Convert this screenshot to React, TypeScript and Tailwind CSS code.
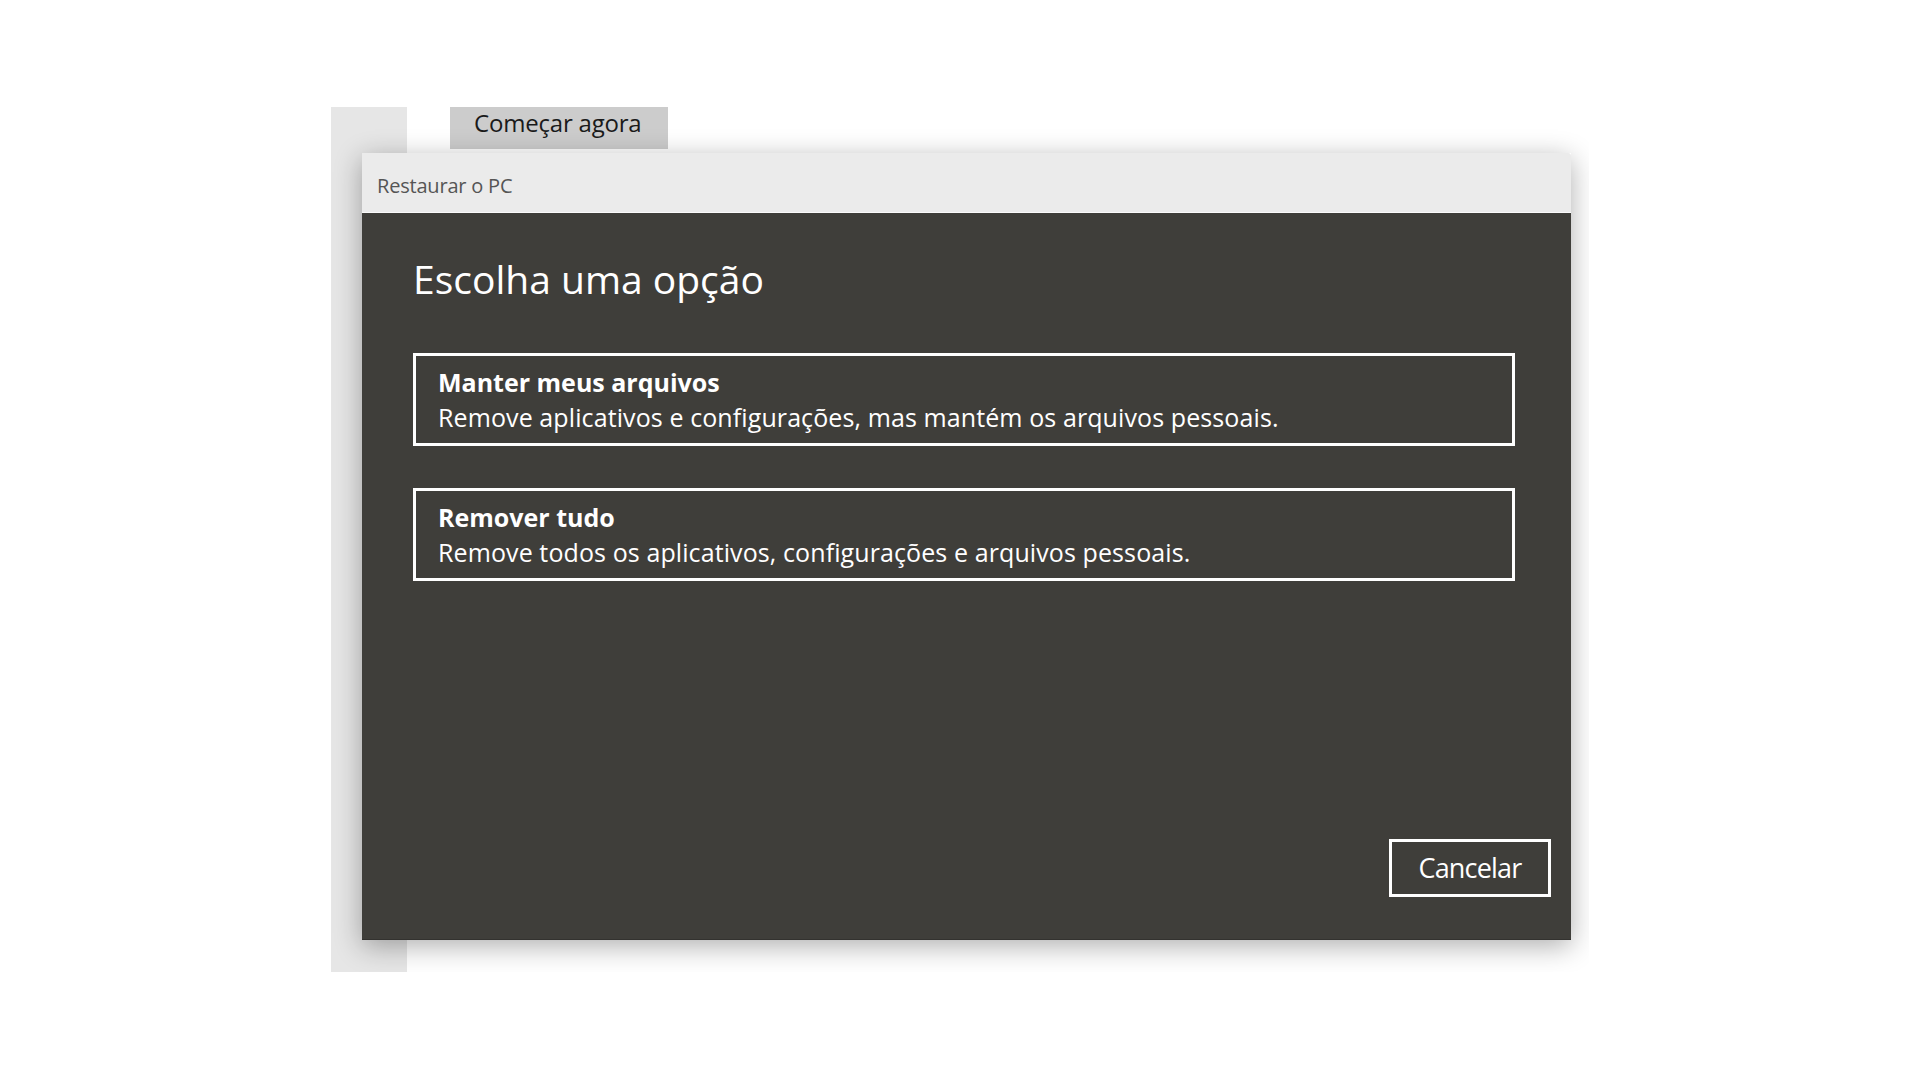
import React from "react";

const font = { fontFamily: '"Open Sans", "Noto Sans", Arial, sans-serif' };

function Option({ title, desc }: { title: string; desc: string }) {
  return (
    <div className="border-[3px] border-white pt-[9px] pb-[8px] pl-[22px] pr-[22px] text-white">
      <div className="text-[25px] leading-[35px] font-bold">{title}</div>
      <div className="text-[25px] leading-[35px] tracking-[0.1px]">{desc}</div>
    </div>
  );
}

export default function App() {
  return (
    <div className="w-[1920px] h-[1080px] bg-white pt-[107px] pl-[331px]" style={font}>
      <div className="relative w-[1258px] h-[865px] overflow-hidden bg-white flex">
        <div className="w-[76px] h-full bg-[#e6e6e6]" />
        <div className="ml-[43px]">
          <div className="h-[42px] w-[218px] bg-[#cccccc] pt-[4px] pl-[24px] text-[24px] leading-none text-[#1a1a1a] tracking-[-0.2px]">
            Começar agora
          </div>
        </div>

        <div className="absolute left-[31px] top-[46px] w-[1209px] h-[787px] flex flex-col shadow-[0_6px_26px_rgba(0,0,0,0.32)]">
          <div className="h-[60px] bg-[#ebebeb] border-b border-[#fafafa] rounded-tr-[3px] pt-[23px] pl-[15px] text-[20px] leading-none text-[#555555] tracking-[-0.2px]">
            Restaurar o PC
          </div>
          <div className="flex-1 bg-[#3f3e3a] border-b border-[#33322f] flex flex-col pl-[51px] pr-[20px] pt-[46px] pb-[42px]">
            <div className="text-[39px] leading-none font-normal text-white">
              Escolha uma opção
            </div>
            <div className="mt-[55px] mr-[36px] flex flex-col gap-[42px]">
              <Option
                title="Manter meus arquivos"
                desc="Remove aplicativos e configurações, mas mantém os arquivos pessoais."
              />
              <Option
                title="Remover tudo"
                desc="Remove todos os aplicativos, configurações e arquivos pessoais."
              />
            </div>
            <div className="flex-1" />
            <div className="flex justify-end">
              <div className="w-[162px] h-[58px] border-[3px] border-white flex items-center justify-center text-white text-[27px] leading-none tracking-[-0.8px] pb-[2px]">
                Cancelar
              </div>
            </div>
          </div>
        </div>
      </div>
    </div>
  );
}
